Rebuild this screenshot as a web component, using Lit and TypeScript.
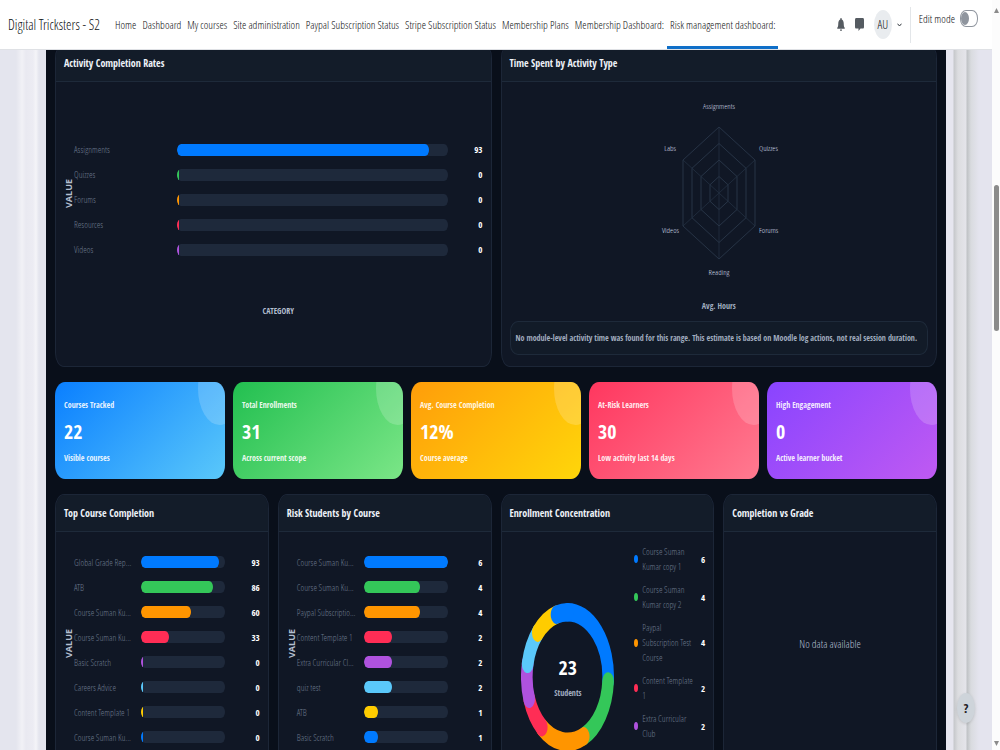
import { LitElement, html, svg, css } from "lit";
import { customElement, property } from "lit/decorators.js";
import { styleMap } from "lit/directives/style-map.js";
import { classMap } from "lit/directives/class-map.js";

const PALETTE = ["#007aff", "#34c759", "#ff9500", "#ff2d55", "#af52de", "#5ac8fa", "#ffcc00"];
const colorAt = (i: number) => PALETTE[i % PALETTE.length];

type Datum = { label: string; value: number };

const NAV = [
  "Home",
  "Dashboard",
  "My courses",
  "Site administration",
  "Paypal Subscription Status",
  "Stripe Subscription Status",
  "Membership Plans",
  "Membership Dashboard:",
  "Risk management dashboard:",
];

const ACTIVITY: Datum[] = [
  { label: "Assignments", value: 93 },
  { label: "Quizzes", value: 0 },
  { label: "Forums", value: 0 },
  { label: "Resources", value: 0 },
  { label: "Videos", value: 0 },
];

const COMPLETION: Datum[] = [
  { label: "Global Grade Rep...", value: 93 },
  { label: "ATB", value: 86 },
  { label: "Course Suman Ku...", value: 60 },
  { label: "Course Suman Ku...", value: 33 },
  { label: "Basic Scratch", value: 0 },
  { label: "Careers Advice", value: 0 },
  { label: "Content Template 1", value: 0 },
  { label: "Course Suman Ku...", value: 0 },
];

const RISK: Datum[] = [
  { label: "Course Suman Ku...", value: 6 },
  { label: "Course Suman Ku...", value: 4 },
  { label: "Paypal Subscriptio...", value: 4 },
  { label: "Content Template 1", value: 2 },
  { label: "Extra Curricular Cl...", value: 2 },
  { label: "quiz test", value: 2 },
  { label: "ATB", value: 1 },
  { label: "Basic Scratch", value: 1 },
];

const ENROLLMENT: Datum[] = [
  { label: "Course Suman Kumar copy 1", value: 6 },
  { label: "Course Suman Kumar copy 2", value: 4 },
  { label: "Paypal Subscription Test Course", value: 4 },
  { label: "Content Template 1", value: 2 },
  { label: "Extra Curricular Club", value: 2 },
  { label: "quiz test", value: 2 },
  { label: "ATB", value: 2 },
  { label: "Basic Scratch", value: 1 },
];

const STATS = [
  { label: "Courses Tracked", value: "22", note: "Visible courses", tone: "blue" },
  { label: "Total Enrollments", value: "31", note: "Across current scope", tone: "green" },
  { label: "Avg. Course Completion", value: "12%", note: "Course average", tone: "amber" },
  { label: "At-Risk Learners", value: "30", note: "Low activity last 14 days", tone: "red" },
  { label: "High Engagement", value: "0", note: "Active learner bucket", tone: "violet" },
];

/** Horizontal bar chart with a rotated axis title. */
@customElement("bar-chart")
export class BarChart extends LitElement {
  @property({ attribute: false }) data: Datum[] = [];
  @property({ type: Number }) max = 100;

  static styles = css`
    :host { display: block; }
    .plot { display: grid; grid-template-columns: 10px 1fr; align-items: center; min-height: 205px; }
    .axis {
      font: bold 9px/9px "Open Sans", sans-serif;
      color: #b4bfd0;
      writing-mode: vertical-rl;
      transform: rotate(180deg);
    }
    .rows { display: grid; gap: 10px; margin: 12px 0 0; padding: 0; list-style: none; }
    .row {
      display: grid;
      grid-template-columns: minmax(58px, 23%) 1fr 26px;
      column-gap: 9px;
      align-items: center;
      height: 15px;
      font-size: 9px;
      line-height: 15px;
    }
    .label { color: #6b788c; white-space: nowrap; }
    .track { height: 12px; border-radius: 4px / 6px; background: #1e293b; overflow: hidden; }
    .fill { height: 100%; min-width: 2px; border-radius: 4px / 6px; }
    .value { text-align: right; font: bold 9px/15px "Open Sans Condensed", sans-serif; color: #fff; }
    .category {
      margin-top: 7px;
      padding-left: 10px;
      text-align: center;
      font: bold 8px/15px "Open Sans Condensed", sans-serif;
      color: #b4bfd0;
    }
  `;

  render() {
    return html`
      <div class="plot">
        <span class="axis">VALUE</span>
        <ul class="rows">
          ${this.data.map(
            (d, i) => html`<li class="row">
              <span class="label">${d.label}</span>
              <div class="track">
                <div class="fill" style=${styleMap({ width: `${(d.value / this.max) * 100}%`, background: colorAt(i) })}></div>
              </div>
              <span class="value">${d.value}</span>
            </li>`
          )}
        </ul>
      </div>
      <div class="category">CATEGORY</div>
    `;
  }
}

/** Six-axis radar grid. */
@customElement("radar-chart")
export class RadarChart extends LitElement {
  static styles = css`
    :host { display: flex; flex-direction: column; align-items: center; }
    svg { display: block; width: 200px; height: 204px; }
    .ring { fill: none; stroke: #273446; stroke-width: 1; }
    .spoke { stroke: #1f2b3c; stroke-width: 1; }
    text { font-size: 8px; fill: #d3dbe8; }
    .caption { margin-top: 3px; font: bold 8px/15px "Open Sans Condensed", sans-serif; color: #a0acbf; }
  `;

  private points(scale: number): [number, number][] {
    const w = 36 * scale;
    const h = 66 * scale;
    return [[100, 102 - h], [100 + w, 102 - h / 2], [100 + w, 102 + h / 2], [100, 102 + h], [100 - w, 102 + h / 2], [100 - w, 102 - h / 2]];
  }

  render() {
    return html`
      <svg viewBox="0 0 200 204" role="img" aria-label="Average hours by activity">
        ${this.points(1).map(([x, y]) => svg`<line class="spoke" x1="100" y1="102" x2=${x} y2=${y} />`)}
        ${[0.25, 0.5, 0.75, 1].map((s) => svg`<polygon class="ring" points=${this.points(s).join(" ")} />`)}
        <text x="100" y="18" text-anchor="middle">Assignments</text>
        <text x="140" y="60">Quizzes</text>
        <text x="140" y="142">Forums</text>
        <text x="100" y="184" text-anchor="middle">Reading</text>
        <text x="60" y="142" text-anchor="end">Videos</text>
        <text x="57" y="60" text-anchor="end">Labs</text>
      </svg>
      <div class="caption">Avg. Hours</div>
    `;
  }
}

/** Ring chart with a total in its centre and a legend beside it. */
@customElement("donut-chart")
export class DonutChart extends LitElement {
  @property({ attribute: false }) data: Datum[] = [];

  static styles = css`
    :host { display: grid; grid-template-columns: 1fr 71px; column-gap: 8px; align-items: center; padding-top: 3px; }
    .ring { display: grid; place-items: center; }
    .ring > * { grid-area: 1 / 1; }
    svg { width: 93px; height: 148px; }
    .seg { fill: none; stroke-width: 18.5; stroke-linecap: round; }
    .center { text-align: center; }
    .total { font: bold 20px/26px "Open Sans Condensed", sans-serif; color: #fff; }
    .unit { margin-top: 4px; font: bold 8px/15px "Open Sans Condensed", sans-serif; color: #a3afc2; }
    .legend { display: grid; gap: 8px; margin: 0; padding: 0; list-style: none; }
    .item { display: flex; align-items: center; gap: 4px; font-size: 9px; line-height: 15px; color: #6b788c; }
    .dot { flex: none; width: 4px; height: 8px; border-radius: 50%; }
    .name { flex: 1; }
    .value { font: bold 9px/15px "Open Sans Condensed", sans-serif; color: #fff; }
  `;

  render() {
    const total = this.data.reduce((sum, d) => sum + d.value, 0);
    const r = 64.75;
    const at = (v: number) => {
      const a = (v / total) * Math.PI * 2;
      return `${74 + r * Math.sin(a)} ${74 - r * Math.cos(a)}`;
    };
    let start = 0;
    const arcs = this.data.map((d, i) => {
      const path = `M${at(start)} A${r} ${r} 0 0 1 ${at(start + d.value)}`;
      start += d.value;
      return svg`<path class="seg" d=${path} stroke=${colorAt(i)} />`;
    });
    return html`
      <div class="ring">
        <svg viewBox="0 0 148 148" preserveAspectRatio="none" role="img" aria-label="Enrollment by course">${arcs}</svg>
        <div class="center">
          <div class="total">${total}</div>
          <div class="unit">Students</div>
        </div>
      </div>
      <ul class="legend">
        ${this.data.map(
          (d, i) => html`<li class="item">
            <span class="dot" style=${styleMap({ background: colorAt(i) })}></span>
            <span class="name">${d.label}</span>
            <span class="value">${d.value}</span>
          </li>`
        )}
      </ul>
    `;
  }
}

@customElement("app-root")
export class AppRoot extends LitElement {
  static styles = css`
    :host {
      display: flex;
      height: 100vh;
      overflow: hidden;
      font-family: "Open Sans Condensed Light", "Open Sans Condensed", "Roboto Condensed", sans-serif;
      font-weight: 300;
      background: #e5e5ee;
    }
    * { box-sizing: border-box; }
    .page { flex: 1; min-width: 0; display: flex; flex-direction: column; position: relative; }

    .topbar {
      flex: none;
      display: flex;
      align-items: stretch;
      height: 50px;
      padding-left: 8px;
      background: #fff;
      border-bottom: 1px solid #dfe1e5;
      z-index: 1;
      font-size: 11px;
      color: #0c0e10;
    }
    .brand { align-self: center; width: 104px; font-size: 14px; line-height: 18px; color: inherit; text-decoration: none; white-space: nowrap; }
    nav { display: flex; }
    nav a {
      display: flex;
      align-items: center;
      padding: 3px 3px 0;
      border-bottom: 3px solid transparent;
      color: inherit;
      text-decoration: none;
      white-space: nowrap;
    }
    nav a.active { border-bottom-color: #0f6fc8; }
    .tools { margin-left: auto; display: flex; align-items: center; }
    button { border: 0; padding: 0; background: none; font: inherit; color: inherit; cursor: pointer; }
    .icon { display: block; }
    .tool { margin-right: 10px; }
    .user { display: flex; align-items: center; gap: 5px; }
    .avatar { display: grid; place-items: center; width: 18px; height: 29px; border-radius: 50%; background: #e9ecef; font-size: 12px; }
    .edit {
      display: flex;
      align-items: center;
      gap: 5px;
      height: 36px;
      margin-left: 8px;
      padding: 0 14px 12px 8px;
      border-left: 1px solid #e3e6e9;
      white-space: nowrap;
    }
    .switch {
      appearance: none;
      display: flex;
      width: 18px;
      height: 17px;
      margin: 0;
      padding: 1px 0;
      border: 1px solid #8f959e;
      border-radius: 6px / 8px;
      background: #fff;
    }
    .switch::before { content: ""; width: 8px; height: 13px; border-radius: 50%; background: #8f959e; }

    .body { flex: 1; min-height: 0; display: grid; grid-template-columns: 46px minmax(0, 1fr) 46px; }
    .gutter.left {
      background: linear-gradient(90deg, #e4e5ee 0 16px, #f1f1f6 22px, #e9e9f1 26px, #ececf3 33px, #f4f4f8 36px, #e4e5ee 39px, #e4e5ee);
    }
    .gutter.right {
      background: linear-gradient(90deg, #e6e6ef 0 7px, #c6c8cb 8px, #dcdde0 12px, #e4e4ea 20px, #bfc2c5 21px, #d9dbdf 25px, #e4e4ee 33px);
    }
    .dashboard {
      display: flex;
      flex-direction: column;
      gap: 15px;
      margin-top: -6px;
      padding: 0 9px;
      background: #090f1a;
    }
    .grid { display: grid; gap: 9px; }
    .two { grid-template-columns: repeat(2, minmax(0, 1fr)); }
    .four { grid-template-columns: repeat(4, minmax(0, 1fr)); }
    .five { grid-template-columns: repeat(5, minmax(0, 1fr)); column-gap: 8px; }

    .card { display: flex; flex-direction: column; border: 1px solid #1c2637; border-radius: 9px / 14px; background: #101725; overflow: hidden; }
    .card h2 {
      margin: 0;
      padding: 0 8px;
      border-bottom: 1px solid #1e2a3a;
      background: #131c29;
      font: bold 10px/36px "Open Sans Condensed", sans-serif;
      color: #eef2f8;
    }
    .content { flex: 1; padding: 9px 8px 11px; }
    .note {
      margin: 8px 0 0;
      padding: 8px 5px;
      border: 1px solid #1e2a3a;
      border-radius: 8px / 10px;
      background: #121b28;
      font: bold 8px/16px "Open Sans Condensed", sans-serif;
      color: #a0acbf;
    }
    .empty { display: grid; place-items: center; min-height: 205px; font-size: 11px; color: #b4bfd0; }

    .stat {
      position: relative;
      overflow: hidden;
      padding: 15px 9px 13px;
      border-radius: 10px / 14px;
      font: bold 8px/16px "Open Sans Condensed", sans-serif;
      color: #ffffffe6;
    }
    .stat::after {
      content: "";
      position: absolute;
      top: -30px;
      right: -16px;
      width: 43px;
      height: 73px;
      border-radius: 50%;
      background: #ffffff2e;
    }
    .stat p { margin: 0; }
    .stat .figure { margin: 6px 0 5px; font-size: 20px; line-height: 26px; color: #fff; }
    .blue { background: linear-gradient(135deg, #0a7fff, #5ac8fa); }
    .green { background: linear-gradient(135deg, #22bf50, #7be687); }
    .amber { background: linear-gradient(135deg, #ff9d0a, #ffd60a); }
    .red { background: linear-gradient(135deg, #ff375f, #ff7a90); }
    .violet { background: linear-gradient(135deg, #8944ff, #bf5af2); }

    .help {
      position: absolute;
      right: 17px;
      bottom: 27px;
      width: 18px;
      height: 30px;
      border-radius: 50%;
      background: #ced4da;
      font: bold 13px/30px "Open Sans Condensed", sans-serif;
      color: #1d2125;
      box-shadow: 0 1px 3px #00000022;
    }
    .scroll { flex: none; width: 8px; display: flex; flex-direction: column; align-items: center; padding: 8px 0 4px; background: #fcfcfc; }
    .thumb { width: 5px; height: 146px; margin: 172px 0 auto; border-radius: 3px; background: #8b8b8b; }
  `;

  render() {
    return html`
      <div class="page">
        <header class="topbar">
          <a class="brand" href="#">Digital Tricksters - S2</a>
          <nav>
            ${NAV.map((n, i) => html`<a href="#" class=${classMap({ active: i === NAV.length - 1 })}>${n}</a>`)}
          </nav>
          <div class="tools">
            <button class="tool" aria-label="Notifications">
              <svg class="icon" width="8" height="13" viewBox="0 0 16 16" preserveAspectRatio="none" fill="#555b61">
                <path d="M8 16a2 2 0 0 0 2-2H6a2 2 0 0 0 2 2zM9.500 1.900V1a1.500 1 0 0 0-3 0v.9C4 2.400 2.500 4.300 2.500 7c0 3-.8 4-2 5V13.200h15V12C14.300 11 13.500 10 13.500 7c0-2.700-1.500-4.600-4-5.100z" />
              </svg>
            </button>
            <button class="tool" aria-label="Messages">
              <svg class="icon" width="9" height="13" viewBox="0 0 18 16" preserveAspectRatio="none" fill="#555b61">
                <path d="M2 0h14a2 2 0 0 1 2 2v9a2 2 0 0 1-2 2h-5l-4 3v-3H2a2 2 0 0 1-2-2V2a2 2 0 0 1 2-2z" />
              </svg>
            </button>
            <button class="user" aria-label="User menu">
              <span class="avatar">AU</span>
              <svg class="icon" width="5" height="4" viewBox="0 0 5 4"><path d="M.5.7 2.500 3 4.500.7" fill="none" stroke="#343a40" /></svg>
            </button>
            <label class="edit">Edit mode<input class="switch" type="checkbox" role="switch" /></label>
          </div>
        </header>

        <div class="body">
          <div class="gutter left"></div>
          <main class="dashboard">
            <section class="grid two">
              <article class="card">
                <h2>Activity Completion Rates</h2>
                <div class="content"><bar-chart .data=${ACTIVITY}></bar-chart></div>
              </article>
              <article class="card">
                <h2>Time Spent by Activity Type</h2>
                <div class="content">
                  <radar-chart></radar-chart>
                  <p class="note">No module-level activity time was found for this range. This estimate is based on Moodle log actions, not real session duration.</p>
                </div>
              </article>
            </section>

            <section class="grid five">
              ${STATS.map(
                (s) => html`<article class="stat ${s.tone}">
                  <p>${s.label}</p>
                  <p class="figure">${s.value}</p>
                  <p>${s.note}</p>
                </article>`
              )}
            </section>

            <section class="grid four">
              <article class="card">
                <h2>Top Course Completion</h2>
                <div class="content"><bar-chart .data=${COMPLETION}></bar-chart></div>
              </article>
              <article class="card">
                <h2>Risk Students by Course</h2>
                <div class="content"><bar-chart .data=${RISK} .max=${6}></bar-chart></div>
              </article>
              <article class="card">
                <h2>Enrollment Concentration</h2>
                <div class="content"><donut-chart .data=${ENROLLMENT}></donut-chart></div>
              </article>
              <article class="card">
                <h2>Completion vs Grade</h2>
                <div class="content"><div class="empty">No data available</div></div>
              </article>
            </section>
          </main>
          <div class="gutter right"></div>
        </div>
        <button class="help" aria-label="Help">?</button>
      </div>
      <div class="scroll" aria-hidden="true">
        <svg width="5" height="5" viewBox="0 0 5 5"><path d="M2.500 0 5 5H0z" fill="#8b8b8b" /></svg>
        <div class="thumb"></div>
        <svg width="5" height="5" viewBox="0 0 5 5"><path d="M2.500 5 5 0H0z" fill="#8b8b8b" /></svg>
      </div>
    `;
  }
}
